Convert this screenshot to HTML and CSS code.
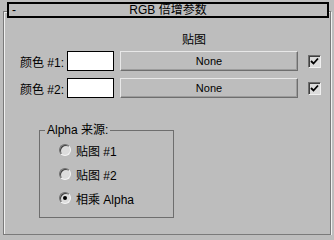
FILE: index.html
```html
<!DOCTYPE html>
<html lang="zh-CN">
<head>
    <meta charset="UTF-8">
    <meta name="viewport" content="width=device-width, initial-scale=1.0">
    <title>RGB 倍增参数</title>
    <link rel="stylesheet" href="styles.css">
</head>
<body>
    <div class="title">
        <span class="toggle">-</span>
        <span class="title-text">RGB 倍增参数</span>
    </div>
    <div class="panel">
        <div class="map-head">贴图</div>

        <div class="row">
            <span class="label">颜色 #1:</span>
            <span class="swatch"></span>
            <button class="map-btn">None</button>
            <span class="check">
                <svg width="9" height="9" viewBox="0 0 9 9"><path d="M1 4 L3.5 6.5 L8 1.5" fill="none" stroke="#000" stroke-width="1.8"/></svg>
            </span>
        </div>
        <div class="row">
            <span class="label">颜色 #2:</span>
            <span class="swatch"></span>
            <button class="map-btn">None</button>
            <span class="check">
                <svg width="9" height="9" viewBox="0 0 9 9"><path d="M1 4 L3.5 6.5 L8 1.5" fill="none" stroke="#000" stroke-width="1.8"/></svg>
            </span>
        </div>

        <fieldset class="group">
            <legend>Alpha 来源:</legend>
            <div class="radio-row"><span class="radio"></span>贴图 #1</div>
            <div class="radio-row"><span class="radio"></span>贴图 #2</div>
            <div class="radio-row"><span class="radio on"></span>相乘 Alpha</div>
        </fieldset>
    </div>
</body>
</html>
```

FILE: styles.css
```css
body {
    margin: 0;
    background: #bdbdbd;
    font-family: 'Liberation Sans', 'Noto Sans CJK SC', sans-serif;
    font-size: 12px;
    color: #000;
}
.title {
    position: relative;
    z-index: 1;
    box-sizing: border-box;
    height: 16px;
    margin: 2px 5px 0 7px;
    border: 2px solid #000;
    background: #bdbdbd;
    display: flex;
    align-items: center;
    line-height: 12px;
}
.toggle {
    width: 12px;
    padding-left: 3px;
}
.title-text {
    flex: 1;
    text-align: center;
    padding-right: 15px;
}
.panel {
    box-sizing: border-box;
    height: 224px;
    margin: -7px 3px 0 3px;
    border: 1px solid #7a7a7a;
    box-shadow: 1px 1px 0 #f0f0f0, inset 1px 1px 0 #f0f0f0;
    padding-top: 21px;
}
.map-head {
    height: 14px;
    line-height: 14px;
    padding-left: 178px;
    margin-bottom: 4px;
}
.row {
    display: flex;
    align-items: center;
    height: 20px;
    margin-bottom: 7px;
}
.label {
    width: 60px;
    text-align: right;
    white-space: nowrap;
}
.swatch {
    box-sizing: border-box;
    width: 47px;
    height: 20px;
    margin-left: 3px;
    background: #fff;
    border: 1px solid #000;
}
.map-btn {
    box-sizing: border-box;
    width: 178px;
    height: 20px;
    margin-left: 6px;
    padding: 0;
    background: #bdbdbd;
    font: inherit;
    font-size: 11px;
    border: 1px solid;
    border-color: #e8e8e8 #6e6e6e #6e6e6e #e8e8e8;
    box-shadow: inset -1px -1px 0 #9c9c9c;
}
.check {
    box-sizing: border-box;
    width: 13px;
    height: 13px;
    margin-left: 10px;
    background: #dcdcdc;
    border: 1px solid;
    border-color: #6e6e6e #f0f0f0 #f0f0f0 #6e6e6e;
    box-shadow: inset 1px 1px 0 #404040;
    display: flex;
    align-items: center;
    justify-content: center;
}
.group {
    box-sizing: border-box;
    width: 135px;
    height: 95px;
    margin: 25px 0 0 35px;
    padding: 1px 0 0 5px;
    border: 1px solid #6e6e6e;
    min-width: 0;
}
.group legend {
    padding: 0 2px;
    line-height: 14px;
}
.radio-row {
    display: flex;
    align-items: center;
    height: 24px;
    padding-left: 14px;
}
.radio {
    box-sizing: border-box;
    width: 12px;
    height: 12px;
    margin-right: 5px;
    border-radius: 50%;
    background: #dcdcdc;
    border: 1px solid;
    border-color: #6e6e6e #f4f4f4 #f4f4f4 #6e6e6e;
    box-shadow: inset 1px 1px 0 #404040;
    position: relative;
}
.radio.on::after {
    content: '';
    position: absolute;
    left: 3px;
    top: 3px;
    width: 4px;
    height: 4px;
    border-radius: 50%;
    background: #000;
}
```
